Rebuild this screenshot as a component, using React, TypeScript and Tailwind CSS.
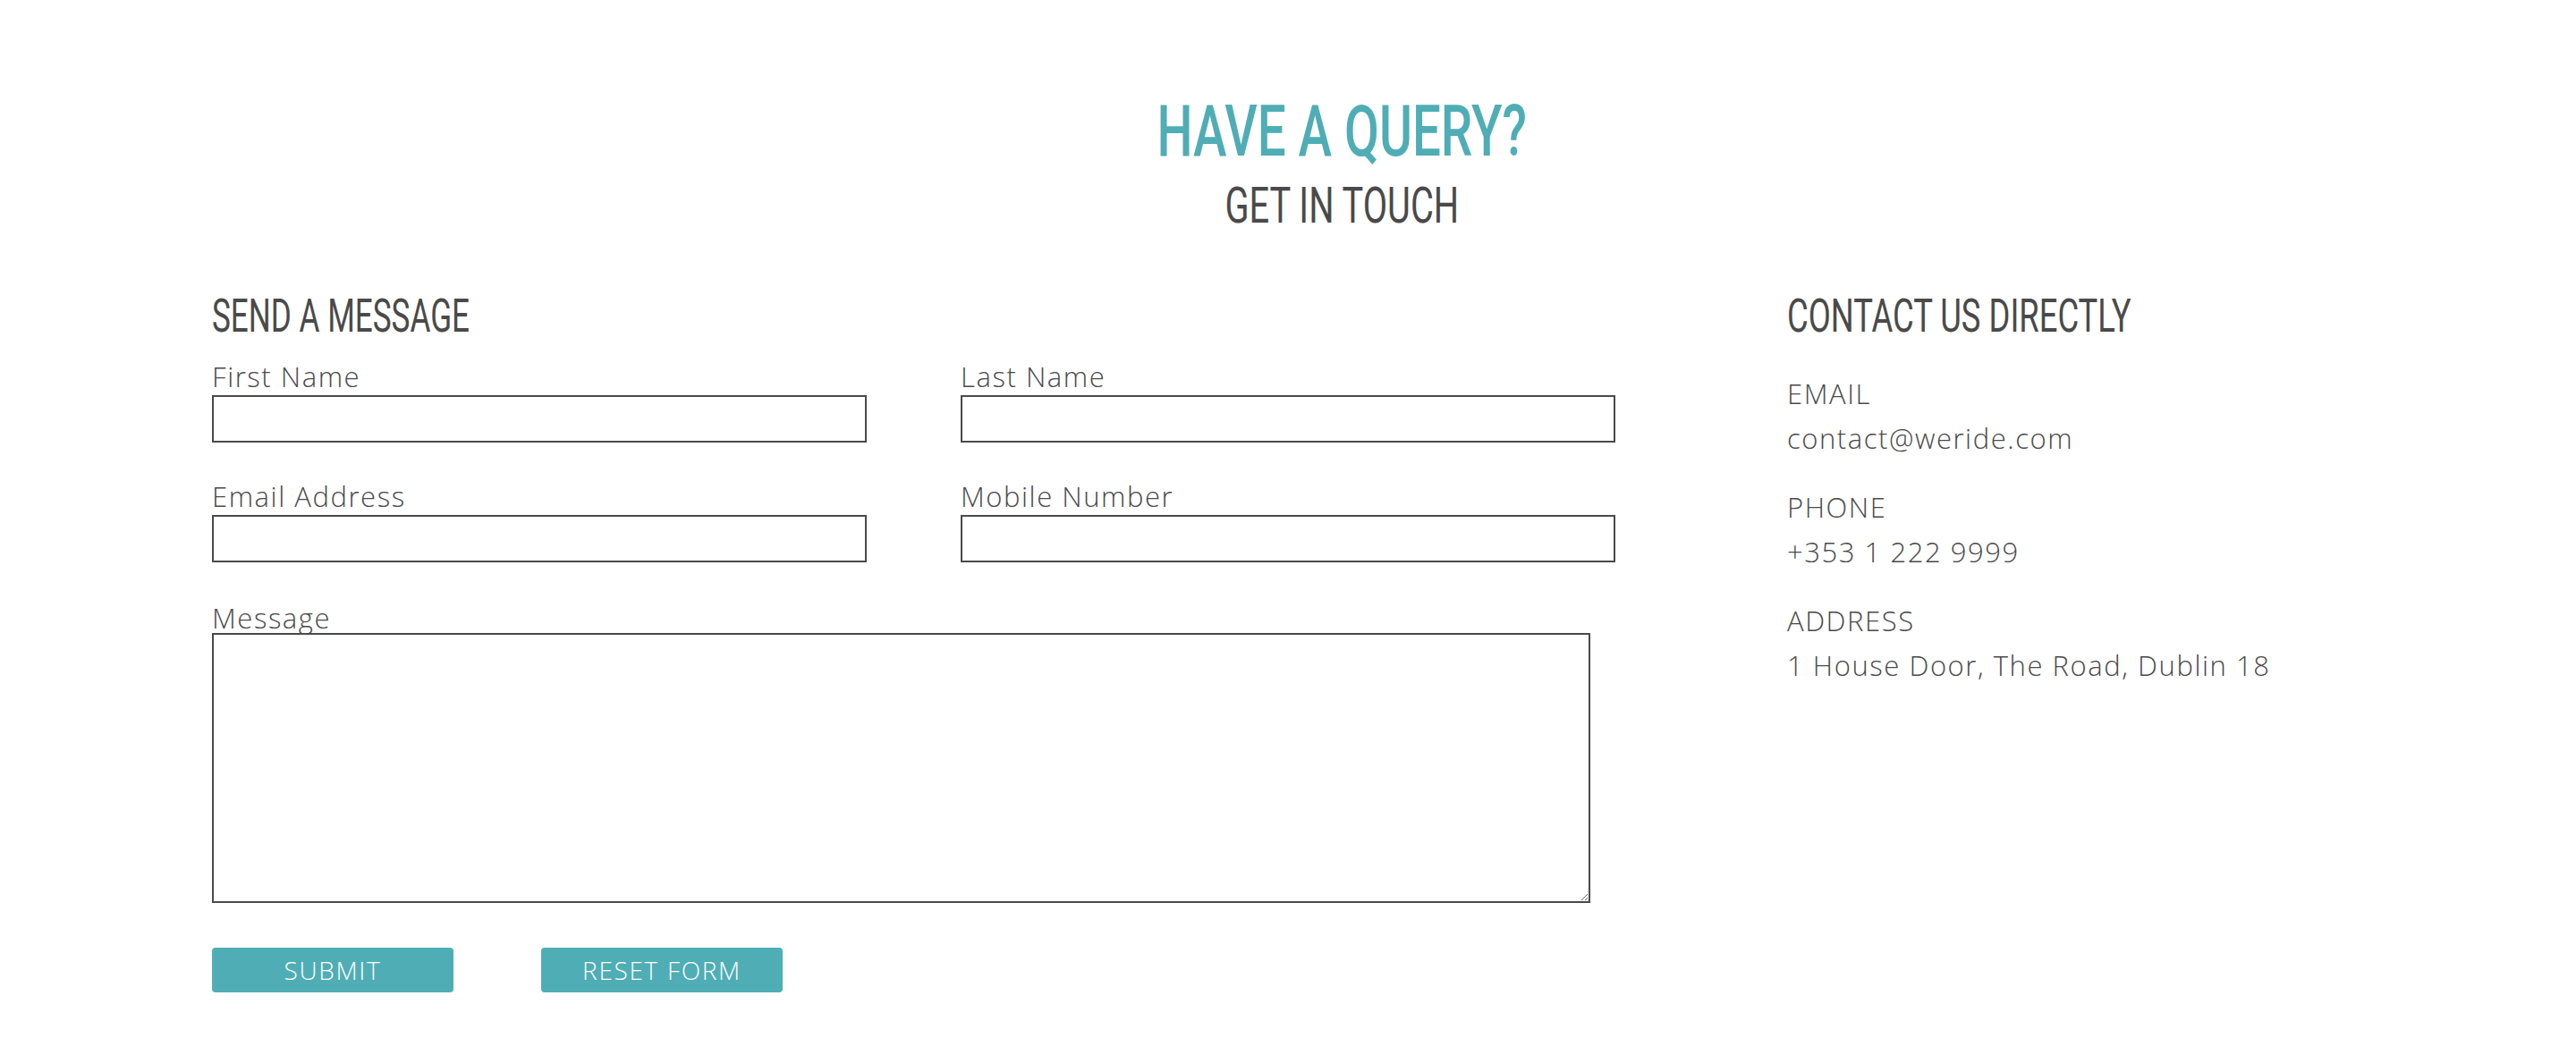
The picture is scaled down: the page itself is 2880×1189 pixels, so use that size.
import React from 'react';

const heading = "font-['Roboto',sans-serif] uppercase text-[#4a4a4a]";
const body = "font-['Open_Sans',Lato,sans-serif] font-light tracking-[0.05em] text-[#4a4a4a]";

function Field({ label }: { label: string }) {
  return (
    <div className="flex flex-col">
      <label className={`${body} text-[31px] leading-[36px]`}>{label}</label>
      <input type="text" className="mt-[3px] h-[53px] w-[732px] border-2 border-[#4a4a4a] bg-white outline-none" />
    </div>
  );
}

function ContactItem({ label, value }: { label: string; value: string }) {
  return (
    <div className="flex flex-col gap-[14px]">
      <span className={`${body} text-[31px] leading-[36px] uppercase`}>{label}</span>
      <span className={`${body} text-[31px] leading-[36px]`}>{value}</span>
    </div>
  );
}

export default function App() {
  return (
    <div className="min-h-screen w-full bg-white">
      <div className="flex flex-col items-center pl-[120px] pt-[104px]">
        <h1 className={`${heading} scale-x-[0.715] text-[79px] leading-[86px] font-medium text-[#4fadb5]`}>Have a Query?</h1>
        <h2 className={`${heading} mt-[8px] scale-x-[0.71] text-[56px] leading-[64px]`}>Get in Touch</h2>
      </div>

      <div className="flex pl-[237px] pt-[62px]">
        <form className="flex w-[1761px] flex-col" onSubmit={(e) => e.preventDefault()}>
          <h3 className={`${heading} origin-left scale-x-[0.675] text-[52px] leading-[60px]`}>Send a Message</h3>

          <div className="mt-[19px] grid grid-cols-[732px_732px] gap-x-[105px] gap-y-[42px]">
            <Field label="First Name" />
            <Field label="Last Name" />
            <Field label="Email Address" />
            <Field label="Mobile Number" />
          </div>

          <div className="mt-[44px] flex flex-col">
            <label className={`${body} text-[31px] leading-[36px]`}>Message</label>
            <textarea className="mt-[-1px] h-[302px] w-[1541px] border-2 border-[#4a4a4a] bg-white outline-none" />
          </div>

          <div className="mt-[50px] flex gap-[98px]">
            <button type="submit" className="h-[50px] w-[270px] rounded-[4px] bg-[#4fadb5] font-['Open_Sans',sans-serif] text-[28px] font-light tracking-[0.06em] uppercase text-white">
              Submit
            </button>
            <button type="reset" className="h-[50px] w-[270px] rounded-[4px] bg-[#4fadb5] font-['Open_Sans',sans-serif] text-[28px] font-light tracking-[0.06em] uppercase text-white">
              Reset Form
            </button>
          </div>
        </form>

        <div className="flex flex-col">
          <h3 className={`${heading} origin-left scale-x-[0.70] text-[52px] leading-[60px] whitespace-nowrap`}>Contact Us Directly</h3>
          <div className="mt-[38px] flex flex-col gap-[41px]">
            <ContactItem label="Email" value="contact@weride.com" />
            <ContactItem label="Phone" value="+353 1 222 9999" />
            <ContactItem label="Address" value="1 House Door, The Road, Dublin 18" />
          </div>
        </div>
      </div>
    </div>
  );
}
